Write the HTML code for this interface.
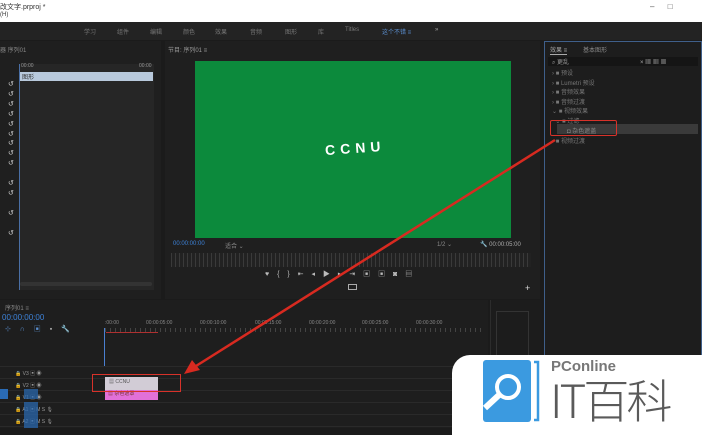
<!DOCTYPE html>
<html><head><meta charset="utf-8"><style>
*{margin:0;padding:0;box-sizing:border-box}
body{width:702px;height:428px;overflow:hidden;background:#1b1b1b;font-family:"Liberation Sans","Noto Sans CJK SC",sans-serif;position:relative;color:#8a8a8a}
.a{position:absolute}
.t{font-size:6px;white-space:nowrap}
</style></head><body>
<div class="a" style="left:0;top:0;width:702px;height:22px;background:#fff"></div>
<div class="a t" style="left:0;top:2px;color:#333;font-size:7px">改文字.prproj *</div>
<div class="a t" style="left:0;top:12px;color:#333;font-size:6px">(H)</div>
<div class="a t" style="left:650px;top:2px;color:#555;font-size:8px">–&nbsp;&nbsp;&nbsp;&nbsp;&nbsp;&nbsp;□</div>
<div class="a" style="left:0;top:22px;width:702px;height:18px;background:#232323"></div>
<div class="a t" style="left:84px;top:27px;color:#777">学习</div>
<div class="a t" style="left:117px;top:27px;color:#777">组件</div>
<div class="a t" style="left:150px;top:27px;color:#777">编辑</div>
<div class="a t" style="left:183px;top:27px;color:#777">颜色</div>
<div class="a t" style="left:215px;top:27px;color:#777">效果</div>
<div class="a t" style="left:250px;top:27px;color:#777">音频</div>
<div class="a t" style="left:285px;top:27px;color:#777">图形</div>
<div class="a t" style="left:318px;top:27px;color:#777">库</div>
<div class="a t" style="left:345px;top:27px;color:#777">Titles</div>
<div class="a t" style="left:382px;top:27px;color:#5b8fd0">这个不错 ≡</div>
<div class="a t" style="left:435px;top:27px;color:#aaa">»</div>
<div class="a" style="left:0;top:41px;width:161px;height:258px;background:#1f1f1f"></div>
<div class="a t" style="left:0;top:45px;color:#888">器 序列01</div>
<div class="a" style="left:19px;top:64px;width:135px;height:226px;background:#262626;border-left:1px solid #4a6fa5"></div>
<div class="a t" style="left:21px;top:63px;color:#999;font-size:5px">00:00</div>
<div class="a t" style="left:139px;top:63px;color:#999;font-size:5px">00:00</div>
<div class="a" style="left:20px;top:72px;width:133px;height:9px;background:#b8c9dc"></div>
<div class="a t" style="left:22px;top:72px;color:#333;font-size:6px">图形</div>
<div class="a t" style="left:8px;top:80px;color:#ccc;font-size:7px;line-height:9.9px">↺<br>↺<br>↺<br>↺<br>↺<br>↺<br>↺<br>↺<br>↺<br><br>↺<br>↺<br><br>↺<br><br>↺</div>
<div class="a" style="left:20px;top:282px;width:132px;height:4px;background:#333;border-radius:2px"></div>
<div class="a" style="left:165px;top:41px;width:375px;height:258px;background:#1f1f1f"></div>
<div class="a t" style="left:168px;top:45px;color:#999">节目: 序列01 ≡</div>
<div class="a" style="left:195px;top:61px;width:316px;height:177px;background:#0c8a3c"></div>
<div class="a" style="left:325px;top:140px;color:#fff;font-size:14px;font-weight:bold;letter-spacing:5px;transform:rotate(-4deg)">CCNU</div>
<div class="a t" style="left:173px;top:241px;color:#3d82d8">00:00:00:00</div>
<div class="a t" style="left:225px;top:241px;color:#888">适合 ⌄</div>
<div class="a t" style="left:437px;top:241px;color:#888">1/2 ⌄</div>
<div class="a t" style="left:480px;top:241px;color:#aaa">🔧 00:00:05:00</div>
<div class="a" style="left:171px;top:253px;width:360px;height:14px;background:repeating-linear-gradient(90deg,#3a3a3a 0 1px,#222 1px 4px)"></div>
<div class="a t" style="left:265px;top:269px;color:#bbb;font-size:7px;word-spacing:6px">♥ { } ⇤ ◂ ▶ ▸ ⇥ ▣ ▣ ◙ ▤</div>
<div class="a" style="left:348px;top:284px;width:9px;height:6px;border:1px solid #aaa"></div>
<div class="a t" style="left:525px;top:283px;color:#ddd;font-size:9px">+</div>
<div class="a" style="left:544px;top:41px;width:158px;height:387px;background:#1d1d1d;border:1px solid #3f5f8a"></div>
<div class="a t" style="left:550px;top:45px;color:#aaa;border-bottom:1px solid #aaa">效果 ≡</div>
<div class="a t" style="left:583px;top:45px;color:#888">基本图形</div>
<div class="a" style="left:548px;top:57px;width:150px;height:9px;background:#151515"></div>
<div class="a t" style="left:552px;top:57px;color:#999">⌕ 更乱</div>
<div class="a t" style="left:640px;top:57px;color:#aaa">× ▦ ▦ ▦</div>
<div class="a t" style="left:552px;top:70px;color:#777;line-height:9.5px">› ■ 预设<br>› ■ Lumetri 预设<br>› ■ 音频效果<br>› ■ 音频过渡<br>⌄ ■ 视频效果<br>&nbsp;&nbsp;⌄ ■ 过滤</div>
<div class="a" style="left:557px;top:124px;width:141px;height:10px;background:#3a3a3a"></div>
<div class="a t" style="left:567px;top:126px;color:#888">◘ 杂色遮盖</div>
<div class="a t" style="left:552px;top:136px;color:#777">› ■ 视频过渡</div>
<div class="a" style="left:550px;top:120px;width:67px;height:16px;border:1.5px solid #d8322a;border-radius:2px"></div>
<div class="a" style="left:0;top:300px;width:488px;height:128px;background:#1e1e1e"></div>
<div class="a t" style="left:5px;top:303px;color:#888">序列01 ≡</div>
<div class="a" style="left:2px;top:313px;color:#3d82d8;font-size:8px">00:00:00:00</div>
<div class="a t" style="left:5px;top:324px;color:#5b8fd0;font-size:7px;word-spacing:7px">⊹ ∩ ▣ <span style="color:#aaa">▪ 🔧</span></div>
<div class="a t" style="left:105px;top:320px;color:#888;font-size:5px">:00:00</div>
<div class="a t" style="left:146px;top:320px;color:#888;font-size:5px">00:00:05:00</div>
<div class="a t" style="left:200px;top:320px;color:#888;font-size:5px">00:00:10:00</div>
<div class="a t" style="left:255px;top:320px;color:#888;font-size:5px">00:00:15:00</div>
<div class="a t" style="left:309px;top:320px;color:#888;font-size:5px">00:00:20:00</div>
<div class="a t" style="left:362px;top:320px;color:#888;font-size:5px">00:00:25:00</div>
<div class="a t" style="left:416px;top:320px;color:#888;font-size:5px">00:00:30:00</div>
<div class="a" style="left:105px;top:328px;width:380px;height:4px;background:repeating-linear-gradient(90deg,#444 0 1px,transparent 1px 5px)"></div>
<div class="a" style="left:106px;top:332px;width:52px;height:1px;background:#b03030"></div>
<div class="a" style="left:104px;top:328px;width:1px;height:100px;background:#4a7fd0"></div>
<div class="a" style="left:0;top:366px;width:488px;height:62px;background:repeating-linear-gradient(180deg,#2a2a2a 0 1px,#1e1e1e 1px 12px)"></div>
<div class="a t" style="left:15px;top:368px;color:#999;font-size:5px;line-height:12px">🔒 V3 ▣ ◉<br>🔒 V2 ▣ ◉<br>🔒 V1 ▣ ◉<br>🔒 A1 ▣ M S 🎙<br>🔒 A2 ▣ M S 🎙</div>
<div class="a" style="left:0;top:389px;width:8px;height:10px;background:#2a6bb5"></div>
<div class="a" style="left:24px;top:389px;width:14px;height:10px;background:#2a6bb5;opacity:.7"></div>
<div class="a" style="left:24px;top:402px;width:14px;height:26px;background:#2a6bb5;opacity:.7"></div>
<div class="a" style="left:105px;top:377px;width:53px;height:13px;background:#d2ccd6"></div>
<div class="a t" style="left:109px;top:378px;color:#555;font-size:5px">▦ CCNU</div>
<div class="a" style="left:105px;top:390px;width:53px;height:10px;background:#e270d8"></div>
<div class="a t" style="left:108px;top:390px;color:#733;font-size:5px">▦ 杂色遮罩</div>
<div class="a" style="left:92px;top:374px;width:89px;height:18px;border:1.5px solid #d8322a"></div>
<div class="a" style="left:490px;top:300px;width:52px;height:128px;background:#1c1c1c;border-left:1px solid #2c2c2c"></div>
<div class="a" style="left:496px;top:311px;width:33px;height:50px;border:1px solid #333"></div>
<svg class="a" style="left:0;top:0" width="702" height="428"><line x1="555" y1="140" x2="196" y2="366" stroke="#d82a20" stroke-width="2.5"/><polygon points="184,374 192,360 200,370" fill="#d82a20"/></svg>
<div class="a" style="left:452px;top:355px;width:260px;height:80px;background:#fff;border-top-left-radius:18px"></div>
<svg class="a" style="left:483px;top:360px" width="58" height="64"><rect x="0" y="0" width="48" height="62" rx="3" fill="#3b9ae0"/><path d="M51 2 H55 V60 H51" stroke="#3b9ae0" stroke-width="2.5" fill="none"/><circle cx="25" cy="27" r="11" fill="none" stroke="#fff" stroke-width="4"/><line x1="16" y1="35" x2="2" y2="48" stroke="#fff" stroke-width="6"/></svg>
<div class="a" style="left:551px;top:358px;color:#777;font-size:15px;font-weight:bold">PConline</div>
<div class="a" style="left:550px;top:372px;color:#5a5a5a;font-size:46px;font-family:'Noto Sans CJK SC',sans-serif;font-weight:300;line-height:54px;letter-spacing:-3px">IT百科</div>
</body></html>
